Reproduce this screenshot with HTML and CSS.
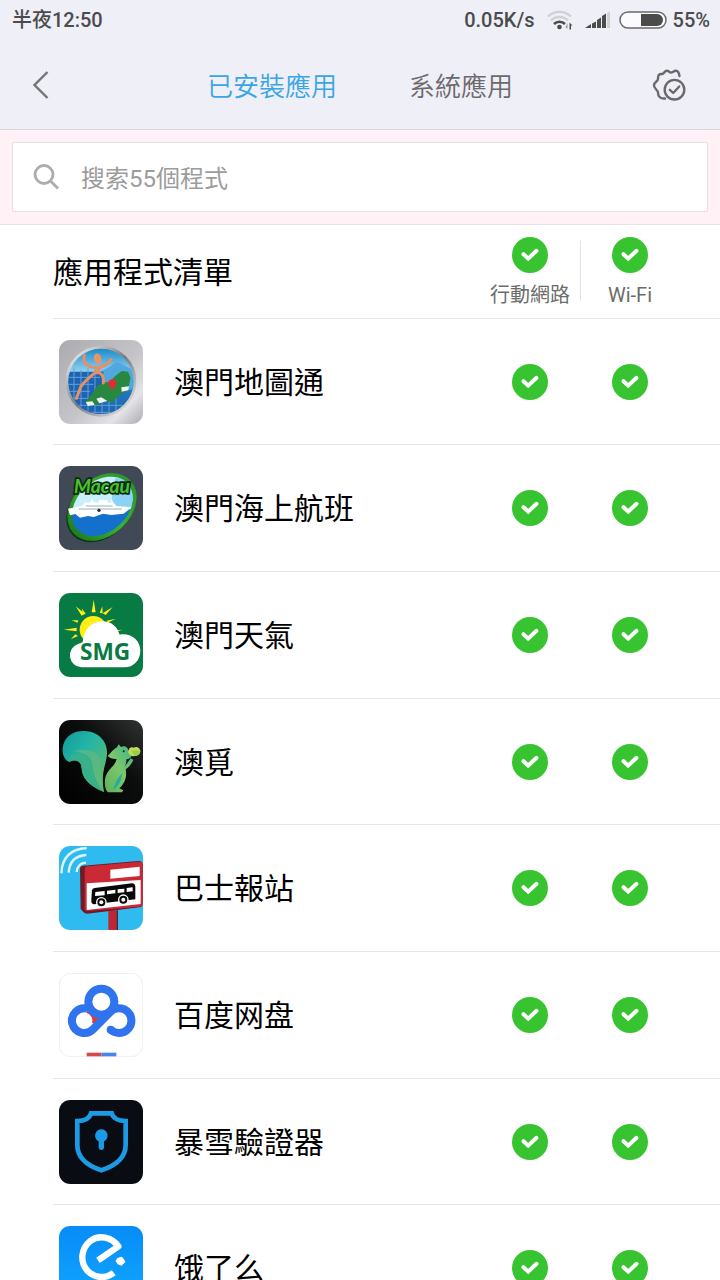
FILE: index.html
```
<!DOCTYPE html>
<html lang="zh-Hant">
<head>
    <meta charset="UTF-8">
    <meta name="viewport" content="width=device-width, initial-scale=1.0">
    <title>已安裝應用</title>
    <link rel="stylesheet" href="styles.css">
</head>
<body>
    <!-- shared tick -->
    <svg class="sprite" aria-hidden="true">
        <symbol id="tick" viewBox="0 0 36 36">
            <path d="M11.5 17.2l4.7 4.4 8.3-7.8" fill="none" stroke="#fff" stroke-width="4" stroke-linecap="round"/>
        </symbol>
    </svg>

    <header class="top">
        <div class="status-bar">
            <span class="time">半夜12:50</span>
            <div class="status-right">
                <span>0.05K/s</span>
                <svg class="wifi" viewBox="0 0 26 20" width="26" height="20">
                    <path d="M1 6.5a16.5 16.5 0 0 1 23 0M4 10.5a12 12 0 0 1 17 0" fill="none" stroke="#d2d0d4" stroke-width="2.4"/>
                    <path d="M7 14a7.8 7.8 0 0 1 11 0" fill="none" stroke="#4b4b4b" stroke-width="2.6"/>
                    <circle cx="12.5" cy="17" r="2.3" fill="#4b4b4b"/>
                    <path d="M20.5 13v6l-2-2z" fill="#999"/>
                    <path d="M22.5 19.5v-7l3 3h-1.500v4z" fill="#4b4b4b"/>
                </svg>
                <svg class="signal" viewBox="0 0 26 18" width="26" height="18">
                    <path d="M0 17l6-4v4zM7 12.5l4-2V17H7zM12 9l4-2.500V17h-4zM17 5l4-2.500V17h-4z" fill="#4b4b4b"/>
                    <path d="M22 2l3-1.500V17h-3z" fill="#d2d0d4"/>
                </svg>
                <svg class="battery" viewBox="0 0 48 18" width="48" height="18">
                    <rect x="1" y="1" width="46" height="16" rx="8" fill="#fbfbfd" stroke="#6a6a6a" stroke-width="1.500"/>
                    <path d="M22 3h16a6 6 0 0 1 0 12H22z" fill="#4b4b4b"/>
                </svg>
                <span class="percent">55%</span>
            </div>
        </div>
        <nav class="nav">
            <button type="button" class="icon-button" aria-label="返回">
                <svg viewBox="0 0 32 32" width="32" height="32">
                    <path d="M23.500 3L10.500 16l13 13" fill="none" stroke="#747476" stroke-width="2.400"/>
                </svg>
            </button>
            <div class="tabs">
                <a href="#" class="tab active">已安裝應用</a>
                <a href="#" class="tab">系統應用</a>
            </div>
            <button type="button" class="icon-button settings" aria-label="設定">
                <svg viewBox="0 0 36 36" width="36" height="36" fill="none" stroke="#6c696d" stroke-width="2.400" stroke-linecap="round" stroke-linejoin="round">
                    <path d="M13 31.500C8 32 6 29 6 25.500C6 23 1.500 21.500 2 18C2.200 15 6 14.500 6 12C6 8 6.500 7 10 7C12.500 7 12 3.700 15 3.700C17 3.700 17 5.500 19 5.500C21 5.500 21.500 3.700 24 3.700C26.500 3.700 27 6 27.500 9"/>
                    <circle cx="22.500" cy="22.700" r="9.800"/>
                    <path d="M17.800 22.800l3.400 3.200 6-6.500"/>
                </svg>
            </button>
        </nav>
    </header>

    <div class="search">
        <label class="search-box">
            <svg viewBox="0 0 28 28" width="28" height="28" fill="none" stroke="#adadad" stroke-width="2.800">
                <circle cx="11" cy="11.500" r="9"/>
                <path d="M17.500 18l7.500 7.500"/>
            </svg>
            <input type="search" placeholder="搜索55個程式" aria-label="搜索程式">
        </label>
    </div>

    <main class="apps">
        <div class="list-header">
            <h1>應用程式清單</h1>
            <label class="column">
                <span class="check"><input type="checkbox" checked><svg><use href="#tick"/></svg></span>
                <span>行動網路</span>
            </label>
            <label class="column">
                <span class="check"><input type="checkbox" checked><svg><use href="#tick"/></svg></span>
                <span>Wi-Fi</span>
            </label>
        </div>

        <ul class="app-list">
            <li class="app">
                <svg class="app-icon" viewBox="27 25 252 252">
                    <defs>
                        <linearGradient id="steel" x1="0" x2="1" y1="0" y2="1"><stop stop-color="#aaaab0"/><stop offset=".55" stop-color="#c5c5c9"/><stop offset=".8" stop-color="#e4e4e7"/><stop offset="1" stop-color="#aaaab0"/></linearGradient>
                        <linearGradient id="mapSky" x1="0" x2="0" y1="0" y2="1"><stop stop-color="#1687c8"/><stop offset=".4" stop-color="#9ed9f3"/><stop offset=".65" stop-color="#2476bd"/><stop offset="1" stop-color="#1d62ae"/></linearGradient>
                        <linearGradient id="ring" x1="0" x2="1" y1="0" y2="1"><stop stop-color="#fff"/><stop offset=".5" stop-color="#777b80"/><stop offset="1" stop-color="#f4f4f4"/></linearGradient>
                        <clipPath id="mapClip"><circle cx="153" cy="149" r="98"/></clipPath>
                    </defs>
                    <rect x="27" y="25" width="252" height="252" rx="34" fill="url(#steel)"/>
                    <circle cx="153" cy="149" r="102" fill="url(#mapSky)" stroke="url(#ring)" stroke-width="8"/>
                    <g clip-path="url(#mapClip)">
                        <path d="M50 130l90-5 40-20 20-15 60 30v50l-100 20-110-10z" fill="#4fa9de"/>
                        <path d="M50 120h110v130H50z" fill="#1e63b1"/>
                        <path d="M72 110v110M93 115v120M114 110v135M135 110v140M156 190v60M177 190v60M198 190v50M50 137h100M50 158h80M50 179h70M50 200h80M60 221h170M80 242h140" stroke="#5ea0da" stroke-width="3"/>
                    </g>
                    <path d="M107 208l20-22 14-22 17-12 20 0 17-18 20-16 19 2 8 18-8 38-26 14-20 22-28-4-18 12-32-2z" fill="#28883f"/>
                    <path d="M107 211l20-2 7 10-20 4zM139 201l15-4 18 11-24 7zM214 167l23-3-2 12-20 4z" fill="#edf4ef"/>
                    <path d="M187 178c-5-13-12-15-12-23a12 12 0 0 1 24 0c0 8-7 10-12 23z" fill="#e62a31"/>
                    <ellipse cx="143" cy="81" rx="11" ry="16" fill="#ed9363" transform="rotate(-15 143 81)"/>
                    <path d="M103 71c-6 25 10 36 35 37 19-1 36-9 45-25M150 110c-14 14-40 30-57 54l-14 36M136 124c18-4 26 8 24 30" fill="none" stroke="#e68f67" stroke-width="9" stroke-linecap="round"/>
                </svg>
                <span class="app-name">澳門地圖通</span>
                <span class="check"><input type="checkbox" checked aria-label="澳門地圖通 行動網路"><svg><use href="#tick"/></svg></span>
                <span class="check"><input type="checkbox" checked aria-label="澳門地圖通 Wi-Fi"><svg><use href="#tick"/></svg></span>
            </li>
            <li class="app">
                <svg class="app-icon" viewBox="27 25 252 252">
                    <defs>
                        <linearGradient id="sea" x1="0" x2="0" y1="0" y2="1"><stop stop-color="#eefcff"/><stop offset=".4" stop-color="#b2e7fa"/><stop offset=".6" stop-color="#1479cf"/><stop offset="1" stop-color="#0758b4"/></linearGradient>
                        <linearGradient id="oval" x1="0" x2="1"><stop stop-color="#1f7d20"/><stop offset=".5" stop-color="#3bb234"/><stop offset="1" stop-color="#2c9428"/></linearGradient>
                        <clipPath id="seaClip"><ellipse cx="157" cy="146" rx="102" ry="76" transform="rotate(-43 157 146)"/></clipPath>
                    </defs>
                    <rect x="27" y="25" width="252" height="252" rx="34" fill="#424956"/>
                    <ellipse cx="153" cy="152" rx="117" ry="86" transform="rotate(-43 153 152)" fill="#0b3812"/>
                    <ellipse cx="156" cy="148" rx="117" ry="86" transform="rotate(-43 156 148)" fill="url(#oval)"/>
                    <g clip-path="url(#seaClip)">
                        <path d="M40 40h230v120H40z" fill="#c9effb"/>
                        <path d="M200 40h70v110h-90z" fill="#8bd2f4"/>
                        <path d="M40 155h230v110H40z" fill="#1470cd"/>
                    </g>
                    <path d="M54 153l42-8 8-10 20-1-1-12 8 11 15 2 1-8 26 1 1 7h10l-1-13 8 13 8 10 46 4-24 19-38 4-24-4-28 10-17-3-24 5-14-11-16 4z" fill="#fff"/>
                    <path d="M86 154h130M108 145h80" stroke="#66879b" stroke-width="2"/>
                    <circle cx="147" cy="158" r="5" fill="#252d3c"/>
                    <text class="macau-text macau-shadow" x="72" y="106">Macau</text>
                    <text class="macau-text" x="72" y="106">Macau</text>
                </svg>
                <span class="app-name">澳門海上航班</span>
                <span class="check"><input type="checkbox" checked aria-label="澳門海上航班 行動網路"><svg><use href="#tick"/></svg></span>
                <span class="check"><input type="checkbox" checked aria-label="澳門海上航班 Wi-Fi"><svg><use href="#tick"/></svg></span>
            </li>
            <li class="app">
                <svg class="app-icon" viewBox="27 24 252 252">
                    <rect x="27" y="24" width="252" height="252" rx="34" fill="#087a44"/>
                    <circle cx="130" cy="134" r="41" fill="#ffee16"/>
                    <path d="M125 82l6-38 6 38zM95 92l-18-28 28 22zM158 85l30-19-21 24zM82 113l-17-7 20 0zM80 139l-39-5 39-6zM84 153l-21 9 13-14zM170 107l27-6-23 12zM180 137l38-3-33 10zM100 89l-5-19 12 16zM149 84l8-20 1 21z" fill="#ffee16"/>
                    <path d="M94 247a36 36 0 0 1-10-70l14-5c2-35 24-63 58-63 29 0 45 16 53 40 34-6 62 17 62 48 0 28-20 50-48 50z" fill="#fff"/>
                    <text class="smg-text" x="90" y="226">SMG</text>
                </svg>
                <span class="app-name">澳門天氣</span>
                <span class="check"><input type="checkbox" checked aria-label="澳門天氣 行動網路"><svg><use href="#tick"/></svg></span>
                <span class="check"><input type="checkbox" checked aria-label="澳門天氣 Wi-Fi"><svg><use href="#tick"/></svg></span>
            </li>
            <li class="app">
                <svg class="app-icon" viewBox="27 25 252 252">
                    <defs>
                        <linearGradient id="night" x1="0" x2="1" y1="1" y2="0"><stop stop-color="#000"/><stop offset=".6" stop-color="#0c0d0d"/><stop offset="1" stop-color="#303232"/></linearGradient>
                        <linearGradient id="tail" x1="0" x2="1" y1="0" y2="1"><stop stop-color="#119b99"/><stop offset=".4" stop-color="#24b5a7"/><stop offset="1" stop-color="#78bd55"/></linearGradient>
                        <linearGradient id="squirrel" x1="1" x2="0" y1="0" y2="1"><stop stop-color="#36b788"/><stop offset=".5" stop-color="#7cc66c"/><stop offset="1" stop-color="#59b45b"/></linearGradient>
                    </defs>
                    <rect x="27" y="25" width="252" height="252" rx="34" fill="url(#night)"/>
                    <path d="M162 241c-48-20-66-44-67-72-1-21-18-28-37-18-18-7-24-31-18-52 8-28 33-42 63-41 42 1 70 31 68 67-1 34-20 53-9 116z" fill="url(#tail)"/>
                    <path d="M62 133c34-17 61-7 66 29 3 26 17 54 34 79-48-20-66-44-67-72-1-21-18-28-37-18z" fill="#38b18a"/>
                    <path d="M70 119c42-10 74-2 84 28-7 29-2 61 8 94-23-27-32-51-34-79-3-28-23-40-58-43z" fill="#62b87e" opacity=".7"/>
                    <path d="M173 133c10-9 17-21 28-26l5-9 7 8c14-6 22 3 22 13l10 13c-2 7-8 10-16 11 1 9-2 16-5 22l18-25 8 4c-4 12-14 24-23 29 6 28-8 47-19 57l12 6-4 6h-43c-12-15-11-44 0-60 8-14 22-20 27-40-10 1-21-2-27-9z" fill="url(#squirrel)"/>
                    <circle cx="221" cy="119" r="3" fill="#141818"/>
                    <path d="M190 234c4-22 15-38 27-49-3 22-10 38-27 49z" fill="#26af98"/>
                    <path d="M234 122c1-14 10-17 17-14 10-6 21 2 20 12-3 9-7 12-18 13-8 3-15-3-19-11z" fill="#c2da57"/>
                    <path d="M244 118c10-3 20-3 27 2-3 9-7 12-18 13z" fill="#96ce4f"/>
                </svg>
                <span class="app-name">澳覓</span>
                <span class="check"><input type="checkbox" checked aria-label="澳覓 行動網路"><svg><use href="#tick"/></svg></span>
                <span class="check"><input type="checkbox" checked aria-label="澳覓 Wi-Fi"><svg><use href="#tick"/></svg></span>
            </li>
            <li class="app">
                <svg class="app-icon" viewBox="27 25 252 252">
                    <rect x="27" y="25" width="252" height="252" rx="34" fill="#2fbbef"/>
                    <path d="M34 107c2-47 28-73 76-76M56 105c2-32 20-51 53-53M80 103c2-20 12-27 28-28" fill="none" stroke="#dff5ff" stroke-width="7"/>
                    <path d="M175 218h24v59h-24z" fill="#bd2932"/>
                    <path d="M199 218h5v59h-5z" fill="#661d29"/>
                    <path d="M90 94q0-9 9-10l165-14q12-1 14 8v120q0 10-9 11L112 228q-8 0-12-5l-8-9z" fill="#711b27"/>
                    <path d="M104 96q0-9 9-10l155-14q10 0 10 8v117q0 9-9 10l-156 13q-9 0-9-9z" fill="#cb2935"/>
                    <path d="M110 137l162-10v72l-162 18z" fill="#fff"/>
                    <path d="M181 96l88-9v28l-88 8z" fill="#fff"/>
                    <path d="M126 158q1-6 8-7l112-14q8 0 10 10v38l-124 15q-8-1-8-9 0-11 2-33z" fill="#080808"/>
                    <path d="M136 163l28-3v13l-29 2zM171 159l25-3v11l-25 3zM203 155l20-2v11l-20 2zM230 151l18-2v12l-18 2z" fill="#fff"/>
                    <circle cx="154" cy="194" r="14" fill="#080808" stroke="#fff" stroke-width="4"/>
                    <circle cx="154" cy="194" r="6" fill="#fff"/>
                    <circle cx="220" cy="186" r="14" fill="#080808" stroke="#fff" stroke-width="4"/>
                    <circle cx="220" cy="186" r="6" fill="#fff"/>
                </svg>
                <span class="app-name">巴士報站</span>
                <span class="check"><input type="checkbox" checked aria-label="巴士報站 行動網路"><svg><use href="#tick"/></svg></span>
                <span class="check"><input type="checkbox" checked aria-label="巴士報站 Wi-Fi"><svg><use href="#tick"/></svg></span>
            </li>
            <li class="app">
                <svg class="app-icon" viewBox="27 24 252 252">
                    <rect x="28" y="25" width="250" height="250" rx="34" fill="#fff" stroke="#e5e5e5" stroke-width="2"/>
                    <path d="M112 131A37 37 0 0 1 138 178" fill="none" stroke="#dc3c37" stroke-width="25"/>
                    <circle cx="154" cy="110" r="39" fill="none" stroke="#2f73ee" stroke-width="24"/>
                    <path d="M182 194a37 37 0 1 0-3-51L129 193A37 37 0 1 1 112 131" fill="none" stroke="#2f73ee" stroke-width="24" stroke-linejoin="round"/>
                    <circle cx="182" cy="194" r="12" fill="#2f73ee"/>
                    <path d="M110 263h44v11h-44z" fill="#d34848"/>
                    <path d="M154 263h45v11h-45z" fill="#4686ec"/>
                </svg>
                <span class="app-name" lang="zh-Hans">百度网盘</span>
                <span class="check"><input type="checkbox" checked aria-label="百度网盘 行動網路"><svg><use href="#tick"/></svg></span>
                <span class="check"><input type="checkbox" checked aria-label="百度网盘 Wi-Fi"><svg><use href="#tick"/></svg></span>
            </li>
            <li class="app">
                <svg class="app-icon" viewBox="27 25 252 252">
                    <rect x="27" y="25" width="252" height="252" rx="34" fill="#090d13"/>
                    <path d="M123 65h62c4 14 20 23 42 23v72c0 37-25 60-73 76-48-16-72-39-72-76V88c22 0 37-9 41-23z" fill="none" stroke="#1b9be6" stroke-width="14"/>
                    <path d="M146 149a19 19 0 1 1 16 0v20q-1 6-8 6t-8-6z" fill="#1b9be6"/>
                </svg>
                <span class="app-name">暴雪驗證器</span>
                <span class="check"><input type="checkbox" checked aria-label="暴雪驗證器 行動網路"><svg><use href="#tick"/></svg></span>
                <span class="check"><input type="checkbox" checked aria-label="暴雪驗證器 Wi-Fi"><svg><use href="#tick"/></svg></span>
            </li>
            <li class="app">
                <svg class="app-icon" viewBox="27 78 252 252">
                    <defs>
                        <linearGradient id="eleBlue" x1="0" x2="0" y1="0" y2="1"><stop stop-color="#078cf8"/><stop offset="1" stop-color="#12aaff"/></linearGradient>
                    </defs>
                    <rect x="27" y="78" width="252" height="252" rx="34" fill="url(#eleBlue)"/>
                    <path d="M144 181l61-42c-20-28-58-36-84-16-29 23-32 64-8 90 22 22 54 24 78 5" fill="none" stroke="#fff" stroke-width="19" stroke-linejoin="round"/>
                    <path d="M203 176l12-4 9 13-10 10-10-4-5-8z" fill="#fff" stroke="#fff" stroke-width="4" stroke-linejoin="round"/>
                </svg>
                <span class="app-name" lang="zh-Hans">饿了么</span>
                <span class="check"><input type="checkbox" checked aria-label="饿了么 行動網路"><svg><use href="#tick"/></svg></span>
                <span class="check"><input type="checkbox" checked aria-label="饿了么 Wi-Fi"><svg><use href="#tick"/></svg></span>
            </li>
        </ul>
    </main>
</body>
</html>
```

FILE: styles.css
```
* {
    margin: 0;
    padding: 0;
    box-sizing: border-box;
}

body {
    font-family: Roboto, "Noto Sans CJK TC", sans-serif;
    background-color: #fff;
    color: #000;
    height: 100vh;
    display: flex;
    flex-direction: column;
    overflow: hidden;
}

:lang(zh-Hans) {
    font-family: Roboto, "Noto Sans CJK SC", sans-serif;
}

.sprite {
    display: none;
}

.top {
    background-color: #efeff8;
    border-bottom: 1px solid #d8d8de;
}

.status-bar {
    height: 40px;
    padding: 0 10px 0 12px;
    display: flex;
    justify-content: space-between;
    align-items: center;
    font-size: 20px;
    font-weight: 500;
    line-height: 24px;
    color: #4b4b4b;
}

.status-right {
    display: flex;
    align-items: center;
    gap: 12px;
}

.battery {
    margin-left: -4px;
}

.percent {
    margin-left: -6px;
}

.nav {
    height: 89px;
    padding: 0 24px;
    display: grid;
    grid-template-columns: 1fr auto 1fr;
    align-items: center;
}

.icon-button {
    background: none;
    border: none;
    cursor: pointer;
    display: flex;
    justify-self: start;
}

.icon-button.settings {
    justify-self: end;
    margin-right: 8px;
}

.tabs {
    display: flex;
    gap: 72px;
    padding-top: 4px;
}

.tab {
    color: #6c686c;
    text-decoration: none;
    font-size: 26px;
    font-weight: 350;
    line-height: 36px;
}

.tab.active {
    color: #3aa5e6;
}

.search {
    padding: 12px;
    background-color: #fff1f6;
    border-bottom: 1px solid #e8e2e5;
}

.search-box {
    display: flex;
    align-items: center;
    gap: 20px;
    height: 70px;
    padding: 0 20px;
    background-color: #fff;
    border: 1px solid #e6e0e4;
    border-radius: 2px;
}

.search-box input {
    flex: 1;
    min-width: 0;
    padding-top: 4px;
    border: none;
    outline: none;
    background: none;
    font: inherit;
    font-size: 24px;
    line-height: 36px;
}

.search-box input::placeholder {
    color: #9c9c9c;
}

.apps {
    flex: 1;
    min-height: 0;
    overflow-y: auto;
    scrollbar-width: none;
    padding-left: 53px;
}

.list-header,
.app {
    display: grid;
    grid-template-columns: 1fr 100px 100px;
    align-items: center;
    padding-right: 40px;
    border-bottom: 1px solid #e6e6e6;
}

.list-header {
    height: 94px;
}

.list-header h1 {
    padding-top: 2px;
    font-size: 30px;
    font-weight: 400;
    line-height: 40px;
}

.column {
    display: flex;
    flex-direction: column;
    align-items: center;
    gap: 10px;
    font-size: 20px;
    line-height: 24px;
    color: #6c6c6c;
}

.column + .column {
    position: relative;
}

.column + .column::before {
    content: '';
    position: absolute;
    left: 0;
    top: 4px;
    bottom: 6px;
    width: 1px;
    background-color: #e2e2e2;
}

.app-list {
    list-style: none;
}

.app {
    grid-template-columns: 96px 1fr 100px 100px;
    height: 127px;
}

.app:nth-child(3n + 1) {
    height: 126px;
}

.app-icon {
    width: 84px;
    height: 84px;
    margin-left: 6px;
}

.app-name {
    padding: 2px 0 0 25px;
    font-size: 30px;
    font-weight: 400;
    line-height: 40px;
}

/* tick is stacked on top of the checkbox */
.check {
    display: grid;
    justify-self: center;
}

.check input,
.check svg {
    grid-area: 1 / 1;
    width: 36px;
    height: 36px;
}

.check input {
    appearance: none;
    border-radius: 50%;
    background-color: #ccc;
    cursor: pointer;
}

.check input:checked {
    background-color: #38c430;
}

.check svg {
    pointer-events: none;
}

.macau-text {
    font-family: Lato, sans-serif;
    font-size: 58px;
    font-style: italic;
    font-weight: 700;
    fill: #4cc035;
}

.macau-shadow {
    stroke: #082b0c;
    stroke-width: 10px;
}

.smg-text {
    font-family: "Open Sans", sans-serif;
    font-size: 68px;
    font-weight: 700;
    fill: #087a44;
}
```
